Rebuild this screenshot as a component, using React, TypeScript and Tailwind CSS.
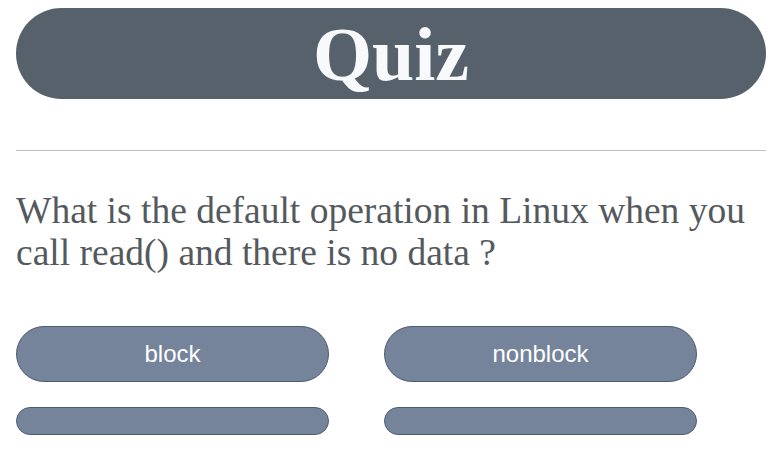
const answers = ["block", "nonblock", "", ""]

export default function App() {
  return (
    <div className="min-h-screen bg-white px-4 pt-2">
      <div className="flex h-[91px] w-[750px] items-center justify-center rounded-full bg-[#56616b]">
        <h1 className="font-['Liberation_Serif',serif] text-[76px] font-bold leading-none text-[#f7f9fb]">
          Quiz
        </h1>
      </div>

      <hr className="mt-[51px] w-[750px] border-t border-[#bdbdbd]" />

      <p className="mt-[39px] w-[750px] font-['Liberation_Serif',serif] text-[37.5px] leading-[42px] text-[#54595e]">
        What is the default operation in Linux when you call read() and there
        is no data ?
      </p>

      <div className="mt-[52px] grid w-[681px] grid-cols-2 gap-x-[55px] gap-y-[25px]">
        {answers.map((a, i) => (
          <button
            key={i}
            className={
              "w-[313px] rounded-full border border-[#4f5c70] bg-[#75849a] font-['Liberation_Sans',sans-serif] text-[24px] leading-none text-white " +
              (a ? "h-[56px]" : "h-[28px]")
            }
          >
            {a}
          </button>
        ))}
      </div>
    </div>
  )
}
